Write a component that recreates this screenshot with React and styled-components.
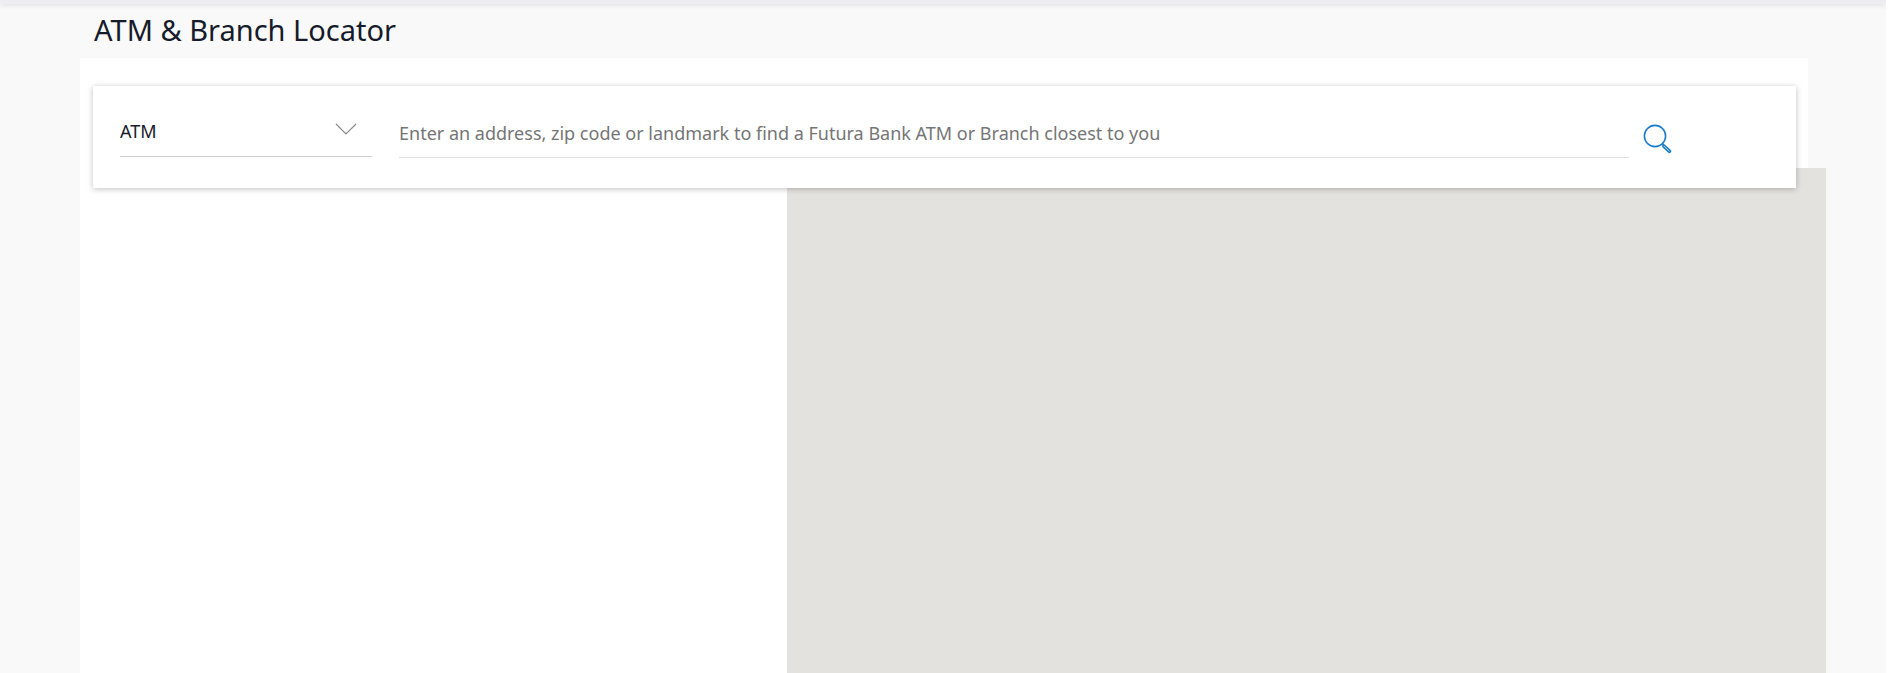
import React from 'react';
import styled, { createGlobalStyle } from 'styled-components';

const GlobalStyle = createGlobalStyle`
  html, body {
    margin: 0;
    padding: 0;
    height: 673px;
    overflow: hidden;
    background: #fff;
    font-family: "Noto Sans", "Open Sans", sans-serif;
  }
`;

const Page = styled.div`
  width: 1886px;
  height: 673px;
  overflow: hidden;
  background: #f9f9f9;
  color: #161b2b;
`;

const TopBar = styled.div`
  height: 4px;
  background: #eeeef2;
  box-shadow: 0 1px 5px rgba(70, 70, 110, 0.16);
`;

const Title = styled.h1`
  margin: 0;
  padding: 6px 0 0 94px;
  height: 48px;
  box-sizing: border-box;
  font-size: 29px;
  line-height: 40px;
  font-weight: 400;
`;

const Panel = styled.main`
  margin: 6px 0 0 80px;
  width: 1728px;
  height: 620px;
  padding-top: 28px;
  box-sizing: border-box;
  background: #fff;
`;

const SearchCard = styled.section`
  position: relative;
  z-index: 1;
  display: flex;
  align-items: flex-start;
  width: 1703px;
  height: 102px;
  margin-left: 13px;
  padding: 0 0 0 27px;
  box-sizing: border-box;
  background: #fff;
  box-shadow: 0 1px 6px rgba(0, 0, 0, 0.25);
`;

const SelectBox = styled.div`
  display: flex;
  align-items: center;
  justify-content: space-between;
  width: 252px;
  height: 52px;
  margin-top: 19px;
  padding: 0 15px 0 0;
  box-sizing: border-box;
  border-bottom: 1px solid #cfcfcf;
  font-size: 18px;
`;

const Chevron = styled.svg`
  width: 22px;
  height: 12px;
  margin-top: -4px;
  stroke: #8a8a8a;
  stroke-width: 1.2;
  fill: none;
`;

const SearchField = styled.div`
  width: 1230px;
  height: 53px;
  margin: 19px 0 0 27px;
  padding-top: 15px;
  box-sizing: border-box;
  border-bottom: 1px solid #e2e2e2;
  font-size: 18px;
  line-height: 26px;
  color: #757575;
`;

const SearchIcon = styled.svg`
  width: 30px;
  height: 30px;
  margin: 38px 0 0 14px;
  fill: none;
  stroke: #1a7cc7;
`;

const ContentRow = styled.div`
  display: flex;
  margin-top: -20px;
`;

const ListColumn = styled.div`
  width: 707px;
  flex: none;
`;

const MapArea = styled.div`
  width: 1039px;
  height: 505px;
  flex: none;
  background: #e3e2de;
`;

export default function App() {
  return (
    <Page>
      <GlobalStyle />
      <TopBar />
      <Title>ATM &amp; Branch Locator</Title>
      <Panel>
        <SearchCard>
          <SelectBox>
            <span>ATM</span>
            <Chevron viewBox="0 0 22 12">
              <path d="M1 1l10 10L21 1" />
            </Chevron>
          </SelectBox>
          <SearchField>
            Enter an address, zip code or landmark to find a Futura Bank ATM or Branch closest to you
          </SearchField>
          <SearchIcon viewBox="0 0 30 30">
            <circle cx="12" cy="12" r="10.6" strokeWidth="1.6" />
            <path d="M20 20l1.5 1.2 5.8 5.4c.9.9-.6 2.4-1.5 1.5l-5.8-5.5z" strokeWidth="1.5" />
          </SearchIcon>
        </SearchCard>
        <ContentRow>
          <ListColumn />
          <MapArea />
        </ContentRow>
      </Panel>
    </Page>
  );
}
